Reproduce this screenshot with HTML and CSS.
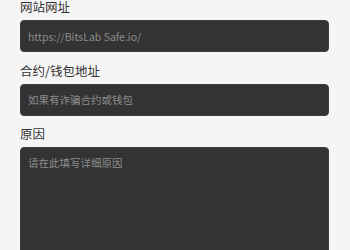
FILE: index.html
```html
<!DOCTYPE html>
<html lang="zh-CN">
<head>
<meta charset="utf-8">
<link rel="stylesheet" href="styles.css">
</head>
<body>
<form class="form">
  <div class="field">
    <label class="label">网站网址</label>
    <input class="input" type="text" placeholder="https://BitsLab Safe.io/">
  </div>
  <div class="field">
    <label class="label">合约/钱包地址</label>
    <input class="input" type="text" placeholder="如果有诈骗合约或钱包">
  </div>
  <div class="field">
    <label class="label">原因</label>
    <textarea class="textarea" placeholder="请在此填写详细原因"></textarea>
  </div>
</form>
</body>
</html>
```

FILE: styles.css
```css
html, body {
  margin: 0;
  padding: 0;
  background: #f5f5f5;
  overflow: hidden;
}
.form {
  display: flex;
  flex-direction: column;
  gap: 11.5px;
  padding: 0 21px 0 20px;
  font-family: "Noto Sans CJK SC", "Noto Sans", sans-serif;
}
.field {
  display: flex;
  flex-direction: column;
}
.label {
  font-size: 12.5px;
  line-height: 14px;
  color: #333;
  margin-bottom: 6px;
}
.input, .textarea {
  box-sizing: border-box;
  width: 100%;
  background: #333;
  border: 1px solid #3c3c3c;
  border-radius: 4px;
  color: #eee;
  font-family: inherit;
  font-size: 10.5px;
  outline: none;
  margin: 0;
}
.input {
  height: 32px;
  padding: 0 7px;
}
.textarea {
  height: 130px;
  padding: 7px 7px;
  line-height: 15px;
  resize: none;
}
.input::placeholder, .textarea::placeholder {
  color: #8c8c8c;
}
```
